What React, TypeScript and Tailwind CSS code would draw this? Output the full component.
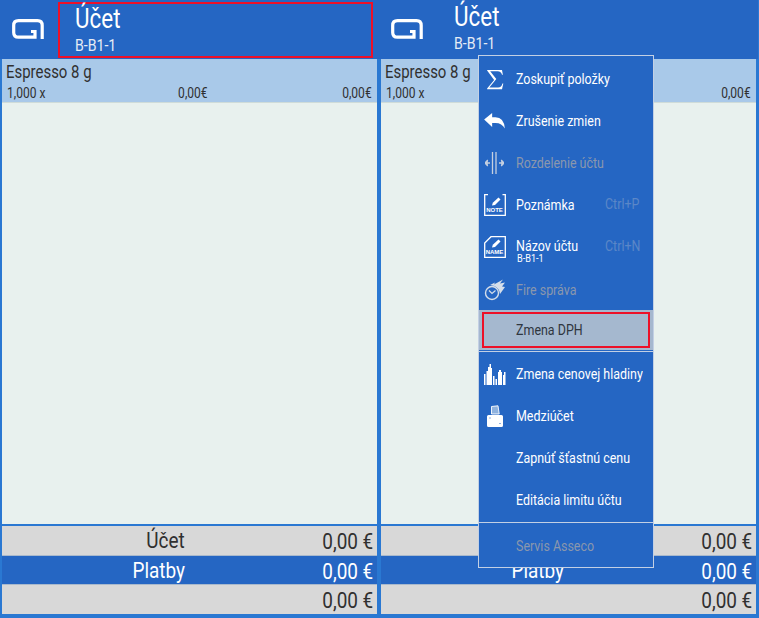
import React from 'react';

const narrow = 'origin-left scale-x-[0.83] whitespace-nowrap';

const LogoMark = () => (
  <svg width="32" height="20" viewBox="0 0 32 20" fill="none">
    <path d="M30.2 20V6.5Q30.2 1.7 25.5 1.7H6.5Q1.7 1.7 1.7 6.5V13.5Q1.7 18.2 6.5 18.2H23V12.5H19" stroke="#fff" strokeWidth="3.2" />
  </svg>
);

const SigmaIcon = () => (
  <svg width="18" height="21" viewBox="0 0 20 24" fill="#fff"><path d="M1 1H18L19 6.5H18Q17 2.5 13 2.5H4.5L11.5 11.5L3.5 21H13.5Q17.5 21 18.5 16.5H19.5L18 23H1V22.2L9 12.6L1 1.8Z" /></svg>
);

const BackIcon = () => (
  <svg width="21" height="16" viewBox="0 0 22 17" fill="#fff"><path d="M0 7L8.5 0V4.5H12Q21 4.5 22 16.5Q19 10.5 12 10.5H8.5V15Z" /></svg>
);

const SplitIcon = () => (
  <svg width="19" height="22" viewBox="0 0 19 22" fill="none" stroke="#c4cfe0" strokeWidth="1.3">
    <path d="M7.5 0V22M11 0V22" />
    <path d="M0 11H5M14 11H19" />
    <path d="M2.8 8L0 11L2.8 14M16.2 8L19 11L16.2 14" fill="#c4cfe0" />
  </svg>
);

const NoteIcon = ({ label, corner }: { label: string; corner?: boolean }) => (
  <div className="relative h-[22px] w-[22px]">
    <svg width="22" height="22" viewBox="0 0 22 22" fill="none">
      <path d={corner ? 'M7 .7H21.3V21.3H.7V7Z' : 'M4 .7H.7V21.3H21.3V.7H18.5'} stroke="#fff" strokeWidth="1.3" />
      <path d="M8 11.5L8.8 8.8L14.5 3.5L16.5 5.5L11 11Z" fill="#fff" />
    </svg>
    <span className="absolute inset-x-0 bottom-[2px] text-center font-['Liberation_Sans',sans-serif] text-[6px] leading-[7px] font-bold text-white">{label}</span>
  </div>
);

const FireIcon = () => (
  <svg width="22" height="22" viewBox="0 0 22 22" fill="none">
    <circle cx="8" cy="14" r="6.5" stroke="#d5deea" strokeWidth="1.4" />
    <path d="M5 11.5L8 14.5L11.5 11.5" stroke="#d5deea" strokeWidth="1.2" />
    <path d="M6 6L11 3.5L10 5.5L19 0.5L16 4.5L21 3.5L18 7.5L21 8L16 15Q15.5 9.5 10.5 7Z" fill="#d5deea" />
  </svg>
);

const BarsIcon = () => (
  <svg width="22" height="21" viewBox="0 0 22 21" fill="#fff">
    <path d="M0 21V10H1.5V21ZM2.5 21V7H4V3H5.5V0H7V4H8V21ZM9 21V12H10.5V21ZM11.5 21V15H13V21ZM14 21V8H15V6H17V8H18V21ZM19 21V11H20V8H21.5V21Z" />
  </svg>
);

const ReceiptIcon = () => (
  <svg width="16" height="22" viewBox="0 0 16 22" fill="#fff">
    <path d="M4.5 1.5L11 .8L12.2 9H4.5Z" fill="#8fb2de" stroke="#fff" strokeWidth=".9" />
    <path d="M1.5 10H14.5Q16 10 16 11.5V20.5Q16 22 14.5 22H1.5Q0 22 0 20.5V11.5Q0 10 1.5 10ZM2.5 12.5V13.5H3.5V12.5ZM12.5 18V19H13.5V18Z" fillRule="evenodd" />
  </svg>
);

type MenuRow = {
  label: string;
  icon?: React.ReactNode;
  disabled?: boolean;
  shortcut?: string;
  sub?: string;
  nudge?: boolean;
};

const groupOne: MenuRow[] = [
  { label: 'Zoskupiť položky', icon: <SigmaIcon /> },
  { label: 'Zrušenie zmien', icon: <BackIcon /> },
  { label: 'Rozdelenie účtu', icon: <SplitIcon />, disabled: true },
  { label: 'Poznámka', icon: <NoteIcon label="NOTE" />, shortcut: 'Ctrl+P' },
  { label: 'Názov účtu', icon: <NoteIcon label="NAME" corner />, shortcut: 'Ctrl+N', sub: 'B-B1-1' },
  { label: 'Fire správa', icon: <FireIcon />, disabled: true, nudge: true },
];

const groupTwo: MenuRow[] = [
  { label: 'Zmena cenovej hladiny', icon: <BarsIcon /> },
  { label: 'Medziúčet', icon: <ReceiptIcon /> },
  { label: 'Zapnúť šťastnú cenu' },
  { label: 'Editácia limitu účtu' },
];

const Row = ({ row }: { row: MenuRow }) => (
  <div className={`relative flex h-[42px] items-center pt-[2px] ${row.nudge ? 'mt-[1px]' : ''}`}>
    <div className="flex w-[37px] shrink-0 justify-center pr-[6px]">{row.icon}</div>
    <div className={`${narrow} text-[15px] leading-[16px] ${row.disabled ? 'text-[#8a97ad]' : 'text-white'} ${row.sub ? '-mt-[2px]' : ''}`}>
      {row.label}
    </div>
    {row.sub && (
      <div className={`${narrow} absolute top-[28px] left-[38px] text-[11px] leading-[11px] text-white`}>{row.sub}</div>
    )}
    {row.shortcut && (
      <div className={`${narrow} absolute top-[13px] left-[126px] text-[15px] leading-[16px] text-[#5b87c7]`}>{row.shortcut}</div>
    )}
  </div>
);

const ContextMenu = () => (
  <div className="absolute top-[55px] left-[478px] w-[176px] border border-[#c3d0e4] bg-[#2566c3] pt-[1px] font-['Roboto',sans-serif]">
    {groupOne.map((r) => (
      <Row key={r.label} row={r} />
    ))}
    <div className="h-[40px] bg-[#a5b8cf] px-[3px] py-[2px]">
      <div className="flex h-[36px] items-center border-2 border-[#ed1028]">
        <span className={`${narrow} ml-[32px] text-[15px] leading-[16px] text-[#2f3640]`}>Zmena DPH</span>
      </div>
    </div>
    <div className="mt-[1px] h-[1px] bg-[#c3d0e4]" />
    {groupTwo.map((r) => (
      <Row key={r.label} row={r} />
    ))}
    <div className="mt-[2px] h-[1px] bg-[#c3d0e4]" />
    <div className="flex h-[44px] items-center pt-[2px] pl-[37px]">
      <span className={`${narrow} text-[15px] leading-[16px] text-[#8a97ad]`}>Servis Asseco</span>
    </div>
  </div>
);

const SumRow = ({ label, blue, short }: { label?: string; blue?: boolean; short?: boolean }) => (
  <div className={`flex items-center justify-between pt-[3px] pr-[4px] ${short ? 'h-[28px]' : 'h-[29px]'} ${blue ? 'bg-[#2566c3] text-white' : 'bg-[#d8d8d8] text-[#303030]'}`}>
    <div className="w-[183px] text-right">
      <span className="inline-block origin-right scale-x-[0.86] text-[22px] leading-[24px]">{label}</span>
    </div>
    <span className="inline-block origin-right scale-x-[0.86] text-[22px] leading-[24px]">0,00 €</span>
  </div>
);

const Pane = ({ framed }: { framed?: boolean }) => (
  <div className="flex h-full w-[379px] flex-col font-['Roboto',sans-serif]">
    <div className="flex h-[59px] shrink-0 bg-[#2566c3]">
      <div className="flex w-[58px] shrink-0 items-start justify-center pt-[19px] pr-[2px]">
        <LogoMark />
      </div>
      <div className={`mt-[2px] flex h-[56px] w-[315px] flex-col ${framed ? 'border-2 border-[#ed1028] pl-[15px]' : 'pl-[17px]'}`}>
        <span className={`${narrow} text-[27px] leading-[30px] text-white`}>Účet</span>
        <span className={`${narrow} mt-[2px] text-[17px] leading-[18px] text-[#e6ecf5]`}>B-B1-1</span>
      </div>
    </div>
    <div className="mx-[2px] flex min-h-0 flex-1 flex-col bg-[#e8f1ee]">
      <div className="h-[44px] shrink-0 border-b border-[#cfdcd9] bg-[#a9c9e9] pr-[5px] pl-[5px] text-[#303030]">
        <div className={`${narrow} -ml-[1px] pt-[3px] text-[18px] leading-[20px]`}>Espresso 8 g</div>
        <div className="mt-[3px] grid grid-cols-3 text-[14px] leading-[16px]">
          <span className="origin-left scale-x-[0.86]">1,000 x</span>
          <span className="origin-center translate-x-[3px] scale-x-[0.86] text-center">0,00€</span>
          <span className="origin-right scale-x-[0.86] text-right">0,00€</span>
        </div>
      </div>
    </div>
    <div className="mx-[2px] mt-[2px] mb-[4px] flex shrink-0 flex-col gap-[1px] bg-[#a9b9cc]">
      <SumRow label="Účet" />
      <SumRow label="Platby" blue short />
      <SumRow />
    </div>
  </div>
);

export default function App() {
  return (
    <div className="relative flex h-[618px] w-[759px] overflow-hidden bg-[#2a78d2]">
      <Pane framed />
      <Pane />
      <ContextMenu />
    </div>
  );
}
